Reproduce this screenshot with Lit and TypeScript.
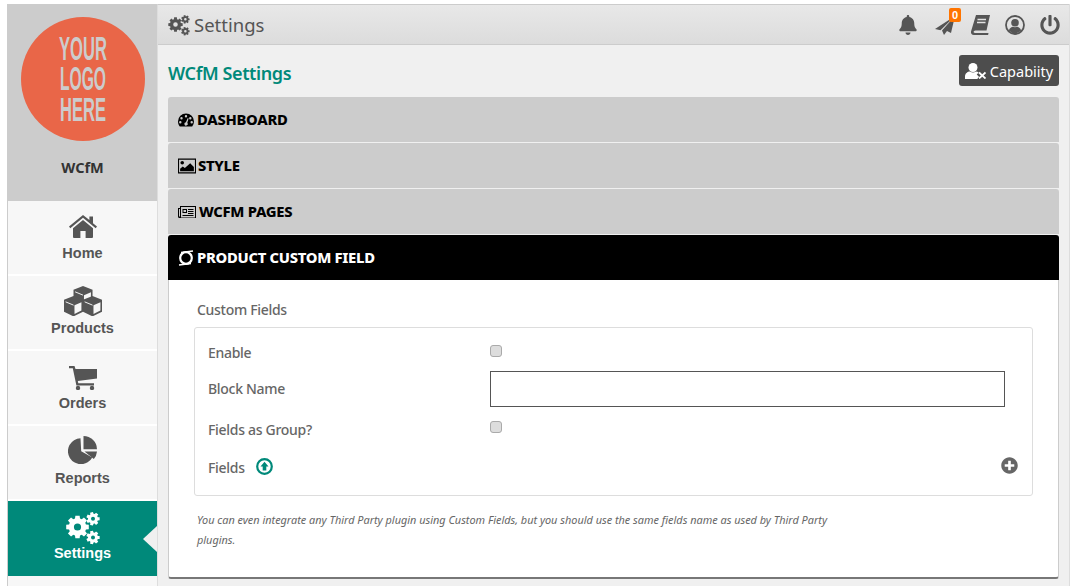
import { LitElement, html, css, svg } from "lit";
import { customElement } from "lit/decorators.js";

function gear(cx: number, cy: number, ro: number, ri: number, hole: number, teeth: number) {
  const pts: string[] = [];
  const step = (Math.PI * 2) / teeth;
  for (let i = 0; i < teeth; i++) {
    const a = i * step;
    const w = step * 0.24;
    const w2 = step * 0.34;
    const p = (r: number, t: number) => `${(cx + r * Math.cos(t)).toFixed(2)} ${(cy + r * Math.sin(t)).toFixed(2)}`;
    pts.push(p(ri, a - w2 - 0.02), p(ro, a - w), p(ro, a + w), p(ri, a + w2 + 0.02));
  }
  const ring = `M${cx - hole} ${cy}a${hole} ${hole} 0 1 0 ${hole * 2} 0a${hole} ${hole} 0 1 0 ${-hole * 2} 0z`;
  return `M${pts.join("L")}z${ring}`;
}

const cogs = svg`<path fill-rule="evenodd" d="${gear(11.5, 15, 11.5, 8.8, 3.6, 8) + gear(27, 6.8, 6.8, 5, 2, 7) + gear(27, 25.5, 6.8, 5, 2, 7)}"/>`;
const cogIcon = (cls: string) => html`<svg class=${cls} viewBox="0 0 34 33" fill="currentColor">${cogs}</svg>`;

const P = {
  bell: "M224 512c35.32 0 63.97-28.65 63.97-64H160.03c0 35.35 28.65 64 63.97 64zm215.39-149.71c-19.32-20.76-55.47-51.99-55.47-154.29 0-77.7-54.48-139.9-127.94-155.16V32c0-17.67-14.32-32-31.98-32s-31.98 14.33-31.98 32v20.84C118.56 68.1 64.08 130.3 64.08 208c0 102.3-36.15 133.53-55.47 154.29-6 6.45-8.66 14.16-8.61 21.71.11 16.4 12.98 32 32.1 32h383.8c19.12 0 32-15.6 32.1-32 .05-7.55-2.61-15.27-8.61-21.71z",
  power: "M400 54.1c63 45 104 118.6 104 201.9 0 136.8-110.8 247.7-247.5 248C120 504.3 8.2 393 8 256.4 7.9 173.1 48.9 99.3 111.8 54.2c11.7-8.3 28-4.8 35 7.7L162.6 90c5.9 10.5 3.1 23.8-6.6 31-41.5 30.8-68 79.6-68 134.9-.1 92.3 74.5 168.1 168 168.1 91.6 0 168.6-74.2 168-169.1-.3-51.8-24.7-101.8-68.1-134-9.7-7.2-12.4-20.5-6.4-30.9l15.8-28.1c7-12.4 23.2-16.1 34.8-7.8zM296 264V24c0-13.3-10.7-24-24-24h-32c-13.3 0-24 10.7-24 24v240c0 13.3 10.7 24 24 24h32c13.3 0 24-10.7 24-24z",
  plus: "M256 8C119 8 8 119 8 256s111 248 248 248 248-111 248-248S393 8 256 8zm144 276c0 6.6-5.4 12-12 12h-92v92c0 6.6-5.4 12-12 12h-56c-6.6 0-12-5.4-12-12v-92h-92c-6.6 0-12-5.4-12-12v-56c0-6.6 5.4-12 12-12h92v-92c0-6.6 5.4-12 12-12h56c6.6 0 12 5.4 12 12v92h92c6.6 0 12 5.4 12 12v56z",
};

const cube = (x: number, y: number) => svg`<g transform="translate(${x} ${y}) scale(1.36)">
  <path d="M7 0l7 2.800v8.700l-7 3.500-7-3.500V2.800z" fill="currentColor"/>
  <path d="M7.700 6.800l5.100-2.200v6.100l-5.100 2.500z" fill="#f7f7f7"/>
  <path d="M1.200 4.300l5.800 2.400" stroke="#f7f7f7" stroke-width=".7" fill="none"/>
</g>`;

const ICONS = {
  home: html`<svg class="mi home" viewBox="0 0 28 23" fill="currentColor"><path d="M14 0L0 11.6l1.300 1.600L14 2.800l12.700 10.400 1.300-1.600-4-3.300V1.400h-3.600v3.600z"/><path d="M14 5L4 13.200V22a1 1 0 0 0 1 1h6.400v-7h5.200v7H23a1 1 0 0 0 1-1v-8.800z"/></svg>`,
  cubes: html`<svg class="mi cubes" viewBox="0 0 38 30">${cube(9.5, 0)}${cube(0, 10)}${cube(19, 10)}</svg>`,
  cart: html`<svg class="mi cart" viewBox="0 0 28 24" fill="currentColor"><path d="M0 0h5.500l1 3H28v9.500L8.800 15l.5 2.200H25v2.200H7.400L3.800 2.300H0z"/><circle cx="9" cy="22" r="2.200"/><circle cx="23" cy="22" r="2.200"/></svg>`,
  pie: html`<svg class="mi pie" viewBox="0 0 29 28" fill="currentColor"><path d="M12.500 2.200A13 13 0 1 0 24.300 21.500L13.200 15.200z"/><path d="M15.500 0A13.500 13.500 0 0 1 29 13.200H15.500z"/><path d="M16.500 15.500H29A13.500 13.500 0 0 1 25.800 23z"/></svg>`,
};

@customElement("app-root")
export class AppRoot extends LitElement {
  static styles = css`
    :host { display: block; background: #fff; height: 586px; overflow: hidden; font-family: "Noto Sans", sans-serif; }
    .frame { display: flex; margin-left: 7px; width: 1063px; height: 586px; padding-top: 4px; box-sizing: border-box; }
    .side { flex: none; background: #f7f7f7; box-sizing: border-box; border-left: 1px solid #ccc; border-top: 1px solid #ccc; border-right: 1px solid #ddd; width: 151px; }
    .brand { height: 196px; background: #ccc; display: flex; flex-direction: column; align-items: center; }
    .logo { width: 124px; height: 124px; margin-top: 12px; flex: none; }
    .logo text { font-family: "Liberation Sans", sans-serif; font-weight: 700; fill: #ccc; font-size: 34px; }
    .brand b { margin-top: 16px; font-size: 14.5px; font-weight: 700; color: #333; line-height: 20px; }
    .item { height: 75px; box-sizing: border-box; border-bottom: 2px solid #fff; display: flex; flex-direction: column; align-items: center; color: #555; position: relative; }
    .item .ic { height: 40px; display: flex; align-items: flex-end; justify-content: center; flex: none; }
    .item span { font: 700 14.5px/18px "Liberation Sans", sans-serif; margin-top: 3px; }
    .item.on { background: #00897a; color: #fff; border-bottom: 0; }
    .item.on::after { content: ""; position: absolute; right: 0; top: 25px; border: 13px solid transparent; border-right: 14px solid #f0f0f0; border-left: 0; }
    .mi { display: block; }
    .home { width: 28px; height: 23px; margin-bottom: 3px; }
    .cubes { width: 38px; height: 30px; margin-bottom: 0; }
    .cart { width: 28px; height: 24px; margin-bottom: 1px; }
    .pie { width: 29px; height: 28px; margin-bottom: 2px; }
    .gears { width: 34px; height: 33px; margin-bottom: -4px; }
    .main { flex: 1; background: #f0f0f0; display: flex; flex-direction: column; min-width: 0; border-right: 1px solid #ddd; }
    .top { height: 41px; flex: none; box-sizing: border-box; background: linear-gradient(#e8e8e8, #dcdcdc); border-bottom: 1px solid #ccc; border-top: 1px solid #ccc; display: flex; align-items: center; padding: 1px 9px 0 10px; color: #555; }
    .top .tc { width: 22px; height: 21px; margin-right: 4px; }
    .top h1 { margin: 0 0 2px; font-size: 18.5px; font-weight: 400; flex: 1; }
    .tools { display: flex; align-items: center; gap: 15px; }
    .tools svg { display: block; width: 20px; height: 20px; }
    .tools .bell { margin-right: 2px; }
    .plane { position: relative; }
    .badge { position: absolute; right: -6px; top: -7px; background: #ff7400; color: #fff; font: 700 11px/14px "Liberation Sans", sans-serif; width: 12px; height: 14px; text-align: center; border-radius: 2px; }
    .body { padding: 10px 10px 0 10px; }
    .head { display: flex; justify-content: space-between; align-items: flex-start; height: 42px; }
    .head h2 { margin: 6px 0 0; font-size: 18px; line-height: 24px; font-weight: 600; color: #00897a; letter-spacing: -0.4px; }
    .cap { width: 100px; height: 31px; box-sizing: border-box; background: #4d4d4d; color: #fff; border-radius: 3px; display: flex; align-items: center; justify-content: center; gap: 4px; font-size: 14.5px; }
    .cap svg { width: 21px; height: 16px; }
    .bar { height: 45px; margin-bottom: 1px; background: #ccc; color: #000; border-radius: 3px 3px 0 0; display: flex; align-items: center; padding-left: 10px; font-size: 14.8px; font-weight: 800; letter-spacing: -0.3px; gap: 3px; box-sizing: border-box; }
    .bar span { padding-bottom: 2px; }
    .bar svg { width: 16px; height: 16px; flex: none; }
    .bar.wide svg { width: 18px; }
    .bar.tight { gap: 2px; }
    .bar.on { background: #000; color: #fff; margin-bottom: 0; }
    .panel { height: 299px; box-sizing: border-box; background: #fff; border: 1px solid #ccc; border-top: 0; border-bottom: 2px solid #777; border-radius: 0 0 3px 3px; padding: 20px 25px 0 25px; color: #666; }
    .panel h3 { margin: 0 0 8px 3px; height: 19px; font-size: 14px; line-height: 20px; font-weight: 500; letter-spacing: -0.3px; }
    .box { height: 169px; box-sizing: border-box; border: 1px solid #ddd; border-radius: 3px; padding: 6px 14px 0 13px; }
    .row { display: grid; grid-template-columns: 282px 1fr; align-items: center; font-size: 14px; font-weight: 500; letter-spacing: -0.3px; }
    .r1 { height: 36px; }
    .r2 { height: 38px; }
    .r2 > span { padding-bottom: 2px; }
    .r3 { height: 40px; }
    .r3 > span { padding-top: 2px; }
    .r4 { height: 38px; grid-template-columns: 1fr auto; }
    .check { width: 12px; height: 12px; background: #ddd; border: 1px solid #aaa; box-sizing: border-box; border-radius: 3px; margin-bottom: 2px; }
    .input { height: 36px; box-sizing: border-box; border: 1px solid #555; background: #fff; margin-right: 13px; }
    .fields { display: flex; align-items: center; gap: 10px; }
    .fields span { padding-right: 1px; }
    .up { width: 17px; height: 17px; color: #00897a; display: block; margin-bottom: 2px; }
    .add { width: 17px; height: 17px; color: #666; display: block; margin-bottom: 4px; }
    .note { margin: 14px 0 0 3px; width: 640px; font-size: 10.9px; line-height: 20px; font-style: italic; color: #666; }
  `;

  private item(label: string, icon: unknown, on = false) {
    return html`<div class="item ${on ? "on" : ""}"><div class="ic">${icon}</div><span>${label}</span></div>`;
  }

  render() {
    return html`<div class="frame">
      <aside class="side">
        <div class="brand">
          <svg class="logo" viewBox="0 0 124 124">
            <circle cx="62" cy="62" r="62" fill="#e96648"/>
            <text x="38" y="43" textLength="48" lengthAdjust="spacingAndGlyphs">YOUR</text>
            <text x="39" y="73" textLength="46" lengthAdjust="spacingAndGlyphs">LOGO</text>
            <text x="39" y="104" textLength="46" lengthAdjust="spacingAndGlyphs">HERE</text>
          </svg>
          <b>WCfM</b>
        </div>
        ${this.item("Home", ICONS.home)}
        ${this.item("Products", ICONS.cubes)}
        ${this.item("Orders", ICONS.cart)}
        ${this.item("Reports", ICONS.pie)}
        ${this.item("Settings", cogIcon("mi gears"), true)}
      </aside>
      <main class="main">
        <div class="top">
          ${cogIcon("tc")}
          <h1>Settings</h1>
          <div class="tools">
            <svg class="bell" viewBox="0 0 448 512" fill="currentColor"><path d="${P.bell}"/></svg>
            <div class="plane">
              <svg viewBox="0 0 20 20" fill="currentColor"><path d="M20 1L0 14l5.5 1.200z"/><path d="M20 1L7 15.500l2 4.500 3-4 4 2z"/></svg>
              <span class="badge">0</span>
            </div>
            <svg viewBox="0 0 20 20" fill="currentColor"><path d="M6 0h14l-3.500 15.500H5.500c-1.300 0-1.800.8-1.900 1.300-.1.600.3 1.200 1.400 1.200h13.500l-.4 2H4C1.800 20 .6 18.400 1 16.500z"/><path d="M7.500 4.500h8.500M7 7.500h8.500" stroke="#e2e2e2" stroke-width="1.300"/></svg>
            <svg viewBox="0 0 20 20" fill="currentColor"><circle cx="10" cy="10" r="9" fill="none" stroke="currentColor" stroke-width="1.800"/><circle cx="10" cy="7.800" r="3.800"/><path d="M3.800 15.500c.8-2.700 3-3.800 4-3.800.7.300 1.400.5 2.200.5s1.500-.2 2.200-.5c1 0 3.200 1.100 4 3.800a8.500 8.500 0 0 1-12.400 0z"/></svg>
            <svg viewBox="0 0 512 512" fill="currentColor"><path d="${P.power}"/></svg>
          </div>
        </div>
        <div class="body">
          <div class="head">
            <h2>WCfM Settings</h2>
            <div class="cap">
              <svg viewBox="0 0 21 16" fill="currentColor"><circle cx="8" cy="4.500" r="4.500"/><path d="M0 16v-2.500C0 10.500 2.500 8.500 5 8.500c1 .6 2 1 3 1s2-.4 3-1c1 0 2 .4 2.700 1l-2 2 2.300 2.300-1.700 2.200z"/><path d="M14 9.500l6.500 6M20.500 9.500l-6.500 6" stroke="currentColor" stroke-width="1.800"/></svg>
              <span>Capabiity</span>
            </div>
          </div>
          <div class="bar">
            <svg viewBox="0 0 16 16" fill="currentColor"><path fill-rule="evenodd" d="M8 1.500A8 8 0 0 0 0 9.500c0 2 .7 3.700 1.800 5h12.400A8 8 0 0 0 16 9.500a8 8 0 0 0-8-8zM8 3a1.200 1.200 0 1 1 0 2.400A1.200 1.200 0 0 1 8 3zM3.500 5a1.200 1.200 0 1 1 0 2.400 1.200 1.200 0 0 1 0-2.400zm8.800 0a1.200 1.200 0 1 1 0 2.400 1.200 1.200 0 0 1 0-2.400zM2.300 9a1.200 1.200 0 1 1 0 2.400 1.200 1.200 0 0 1 0-2.400zm11.400 0a1.200 1.200 0 1 1 0 2.400 1.200 1.200 0 0 1 0-2.400zM9.800 6l.8.400-1.300 4.300a1.700 1.700 0 1 1-1.400-.5z"/></svg>
            <span>DASHBOARD</span>
          </div>
          <div class="bar wide tight">
            <svg viewBox="0 0 17 14" fill="currentColor"><path fill-rule="evenodd" d="M0 0h17v14H0zm1 1v12h15V1z"/><circle cx="4" cy="4" r="1.700"/><path d="M2 12V9.500l2.500-2 2 1.500 5-4.500L15 8v4z"/></svg>
            <span>STYLE</span>
          </div>
          <div class="bar wide">
            <svg viewBox="0 0 18 14" fill="currentColor"><path fill-rule="evenodd" d="M2 1h16v12H1.500A1.500 1.500 0 0 1 0 11.500V3h2zM3 2v10.500h14V2zM1 4v7.500h1V4z"/><path fill-rule="evenodd" d="M4.500 4h4.500v4H4.500zm1 1v2H8V5z"/><path d="M10 4h5.500v1H10zm0 2h5.500v1H10zm0 2h5.500v1H10zm-5.500 2h11v1h-11z"/></svg>
            <span>WCFM PAGES</span>
          </div>
          <div class="bar on">
            <svg viewBox="0 0 16 16" fill="none" stroke="currentColor"><circle cx="8" cy="8" r="5.800" stroke-width="2.200"/><path d="M3 2.500L15 1M1 15L13 13.500" stroke-width="1.300"/></svg>
            <span>PRODUCT CUSTOM FIELD</span>
          </div>
          <div class="panel">
            <h3>Custom Fields</h3>
            <div class="box">
              <div class="row r1"><span>Enable</span><div class="check"></div></div>
              <div class="row r2"><span>Block Name</span><div class="input"></div></div>
              <div class="row r3"><span>Fields as Group?</span><div class="check"></div></div>
              <div class="row r4">
                <div class="fields"><span>Fields</span>
                  <svg class="up" viewBox="0 0 17 17"><circle cx="8.5" cy="8.5" r="7.300" fill="none" stroke="currentColor" stroke-width="2.200"/><path d="M8.500 3.800L12.500 8.500H10.300V12.500H6.700V8.500H4.500z" fill="currentColor"/></svg>
                </div>
                <svg class="add" viewBox="0 0 512 512" fill="currentColor"><path d="${P.plus}"/></svg>
              </div>
            </div>
            <p class="note">You can even integrate any Third Party plugin using Custom Fields, but you should use the same fields name as used by Third Party plugins.</p>
          </div>
        </div>
      </main>
    </div>`;
  }
}
